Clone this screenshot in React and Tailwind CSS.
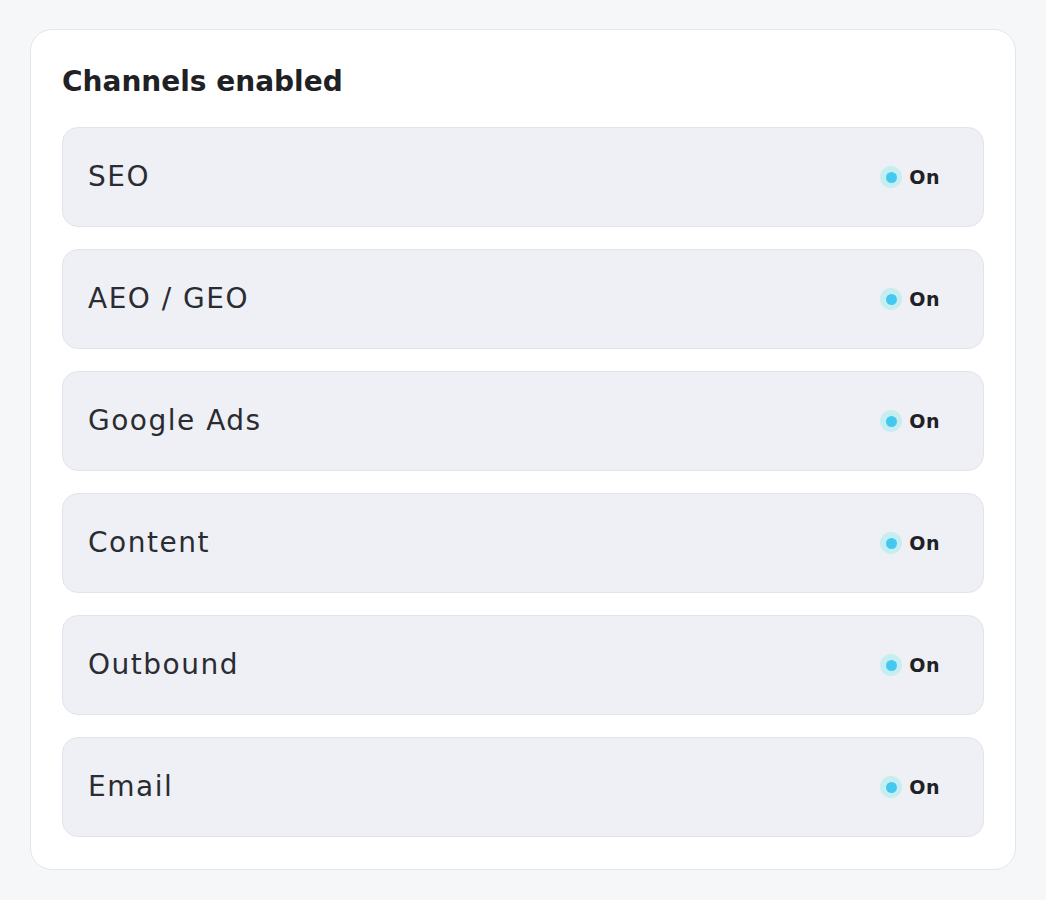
import React from 'react'

const channels = ['SEO', 'AEO / GEO', 'Google Ads', 'Content', 'Outbound', 'Email']

const StatusPill = () => (
  <div className="flex items-center gap-[7px]">
    <span className="w-[22px] h-[22px] rounded-full bg-[#c6eef0] flex items-center justify-center">
      <span className="w-[11px] h-[11px] rounded-full bg-[#45c8f0]" />
    </span>
    <span className="text-[19px] font-bold text-[#1f2125] leading-none tracking-[0.5px] font-['DejaVu_Sans',sans-serif]">On</span>
  </div>
)

export default function App() {
  return (
    <div className="min-h-[900px] bg-[#f6f7f9] pt-[29px] px-[30px] font-['Inter',sans-serif]">
      <div className="bg-white border border-[#e4e6ea] rounded-[22px] px-[31px] pt-[36px] pb-[32px]">
        <h2 className="text-[28px] font-bold text-[#1f2125] leading-[32px] mb-[29px] font-['DejaVu_Sans',sans-serif]">
          Channels enabled
        </h2>

        <div className="flex flex-col gap-[22px]">
          {channels.map((name) => (
            <div
              key={name}
              className="h-[100px] bg-[#eef0f6] border border-[#e1e4ea] rounded-[16px] flex items-center justify-between pl-[25px] pr-[43px]"
            >
              <span className="text-[28px] tracking-[1.5px] text-[#2a2c31] font-['DejaVu_Sans',sans-serif]">{name}</span>
              <StatusPill />
            </div>
          ))}
        </div>
      </div>
    </div>
  )
}
